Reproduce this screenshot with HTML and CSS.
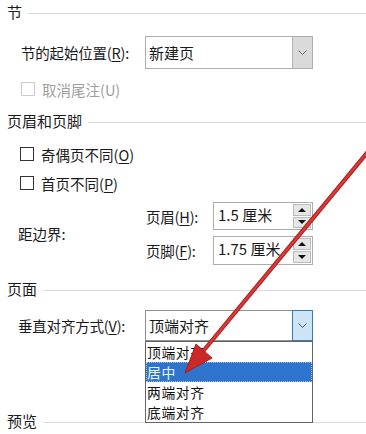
FILE: index.html
```html
<!DOCTYPE html>
<html lang="zh-CN">
<head>
<meta charset="utf-8">
<title>页面设置 - 版式</title>
<link rel="stylesheet" href="styles.css">
</head>
<body>
<div class="page">
  <div class="heading h-first"><span>节</span></div>

  <div class="row row-select1">
    <label class="label">节的起始位置(<u>R</u>):</label>
    <div class="select">
      <span class="value">新建页</span>
      <span class="btn btn-hover"><svg width="9" height="5" viewBox="0 0 9 5"><polyline points="0.5,0.5 4.5,4.5 8.5,0.5" fill="none" stroke="#6a6a6a" stroke-width="1"/></svg></span>
    </div>
  </div>

  <div class="check disabled c-endnote"><span class="box"></span><span>取消尾注(U)</span></div>

  <div class="heading h-hf"><span>页眉和页脚</span></div>

  <div class="check c-odd"><span class="box"></span><span>奇偶页不同(<u>O</u>)</span></div>
  <div class="check c-first"><span class="box"></span><span>首页不同(<u>P</u>)</span></div>

  <div class="margins">
    <div class="m-label">距边界:</div>
    <div class="m-fields">
      <div class="m-row">
        <span class="m-name">页眉(<u>H</u>):</span>
        <div class="spin">
          <span class="value">1.5 厘米</span>
          <span class="spin-btns"><span class="sb up"></span><span class="sb down"></span></span>
        </div>
      </div>
      <div class="m-row r2">
        <span class="m-name">页脚(<u>F</u>):</span>
        <div class="spin">
          <span class="value">1.75 厘米</span>
          <span class="spin-btns"><span class="sb up"></span><span class="sb down"></span></span>
        </div>
      </div>
    </div>
  </div>

  <div class="heading h-page"><span>页面</span></div>

  <div class="row row-select2">
    <label class="label">垂直对齐方式(<u>V</u>):</label>
    <div class="select s2">
      <span class="value">顶端对齐</span>
      <span class="btn btn-pressed"><svg width="9" height="5" viewBox="0 0 9 5"><polyline points="0.5,0.5 4.5,4.5 8.5,0.5" fill="none" stroke="#555" stroke-width="1"/></svg></span>
      <ul class="dropdown">
        <li>顶端对齐</li>
        <li class="sel">居中</li>
        <li>两端对齐</li>
        <li>底端对齐</li>
      </ul>
    </div>
  </div>

  <div class="heading h-preview"><span>预览</span></div>
</div>

<svg class="arrow" width="366" height="434" viewBox="0 0 366 434">
  <line x1="376" y1="142" x2="200" y2="355" stroke="#a81c1c" stroke-width="4.2" stroke-linecap="round"/>
  <line x1="376" y1="142" x2="200" y2="355" stroke="#d63a36" stroke-width="2.4" stroke-linecap="round"/>
  <polygon points="185,373 212,358 196,344" fill="#c92a27" stroke="#a81c1c" stroke-width="1" stroke-linejoin="round"/>
</svg>
</body>
</html>
```

FILE: styles.css
```css
html, body {
  margin: 0;
  padding: 0;
}
body {
  width: 366px;
  height: 434px;
  overflow: hidden;
  background: #ffffff;
  position: relative;
  font-family: "Noto Sans CJK SC", "Microsoft YaHei", sans-serif;
  color: #1a1a1a;
}
u { text-decoration: underline; text-underline-offset: 2px; }

.page {
  padding-left: 7px;
  display: flex;
  flex-direction: column;
}

/* section headings with rule */
.heading {
  display: flex;
  align-items: center;
  height: 22px;
  font-size: 15px;
  line-height: 22px;
  color: #1a1a1a;
}
.heading::after {
  content: "";
  flex: 1;
  height: 1px;
  background: #dcdcdc;
  margin-left: 6px;
  margin-top: 2px;
}
.h-first { margin-top: 1px; }
.h-hf { margin-top: 11px; }
.h-page { margin-top: 13px; }
.h-preview { margin-top: 69px; }

/* label + select rows */
.row {
  display: flex;
  align-items: center;
}
.label {
  box-sizing: border-box;
  width: 138px;
  font-size: 14.5px;
  letter-spacing: -0.2px;
}
.row-select1 { margin-top: 13px; }
.row-select1 .label { padding-left: 14px; }
.row-select2 { margin-top: 10px; }
.row-select2 .label { padding-left: 11px; }

.select {
  position: relative;
  width: 168px;
  height: 33px;
  box-sizing: border-box;
  border: 1px solid #adadad;
  background: #fff;
  display: flex;
  align-items: stretch;
}
.select .value {
  flex: 1;
  font-size: 15px;
  line-height: 31px;
  padding-left: 3px;
}
.s2 { height: 31px; border-color: #8f8f8f; }
.s2 .value { line-height: 29px; }

.btn {
  width: 20px;
  display: flex;
  align-items: center;
  justify-content: center;
  box-sizing: border-box;
}
.btn-hover {
  background: #dadada;
  border-left: 1px solid #b4b4b4;
}
.btn-pressed {
  background: #cce4f7;
  border: 1px solid #3b78ab;
  margin: -1px -1px -1px 0;
  width: 21px;
}

/* dropdown popup */
.dropdown {
  position: absolute;
  left: -1px;
  top: 30px;
  width: 168px;
  box-sizing: border-box;
  margin: 0;
  padding: 0;
  list-style: none;
  background: #fff;
  border: 1px solid #646464;
  z-index: 2;
}
.dropdown li {
  height: 20px;
  line-height: 20px;
  font-size: 13.8px;
  letter-spacing: 0.6px;
  padding-left: 1px;
  color: #111;
}
.dropdown li.sel {
  background: #2f74cc;
  color: #e8f4ff;
  outline: 1px dotted #9cc0ee;
  outline-offset: -1px;
}

/* checkboxes */
.check {
  display: flex;
  align-items: center;
  height: 20px;
  font-size: 14.5px;
  padding-left: 13px;
}
.check .box {
  width: 12px;
  height: 12px;
  border: 1px solid #333;
  margin-right: 7px;
  background: #fff;
}
.check.disabled { color: #a0a0a0; }
.check.disabled .box { border-color: #cccccc; }
.c-endnote { margin-top: 10px; padding-left: 14px; }
.c-odd { margin-top: 12px; }
.c-first { margin-top: 9px; }

/* margins group */
.margins {
  display: flex;
  align-items: center;
  margin-top: 9px;
}
.m-label {
  width: 139px;
  padding-left: 11px;
  box-sizing: border-box;
  font-size: 14.5px;
}
.m-fields {
  display: flex;
  flex-direction: column;
  gap: 6px;
}
.m-row {
  display: flex;
  align-items: center;
}
.m-name {
  width: 67px;
  font-size: 14.5px;
  letter-spacing: -0.2px;
}
.spin {
  width: 100px;
  height: 28px;
  box-sizing: border-box;
  border: 1px solid #adadad;
  display: flex;
}
.m-row.r2 .spin { height: 29px; }
.spin .value {
  flex: 1;
  font-size: 15px;
  line-height: 24px;
  padding-left: 4px;
}
.spin-btns {
  width: 18px;
  display: flex;
  flex-direction: column;
  gap: 1px;
  padding: 1px 1px 1px 0;
}
.sb {
  flex: 1;
  background: #e6e6e6;
  border: 1px solid #bcbcbc;
  position: relative;
}
.sb::after {
  content: "";
  position: absolute;
  left: 50%;
  top: 50%;
  transform: translate(-50%, -50%);
  border-left: 4px solid transparent;
  border-right: 4px solid transparent;
}
.sb.up::after { border-bottom: 4px solid #111; }
.sb.down::after { border-top: 4px solid #111; }

/* annotation arrow overlay */
.arrow {
  position: absolute;
  left: 0;
  top: 0;
  z-index: 5;
  pointer-events: none;
}
```
